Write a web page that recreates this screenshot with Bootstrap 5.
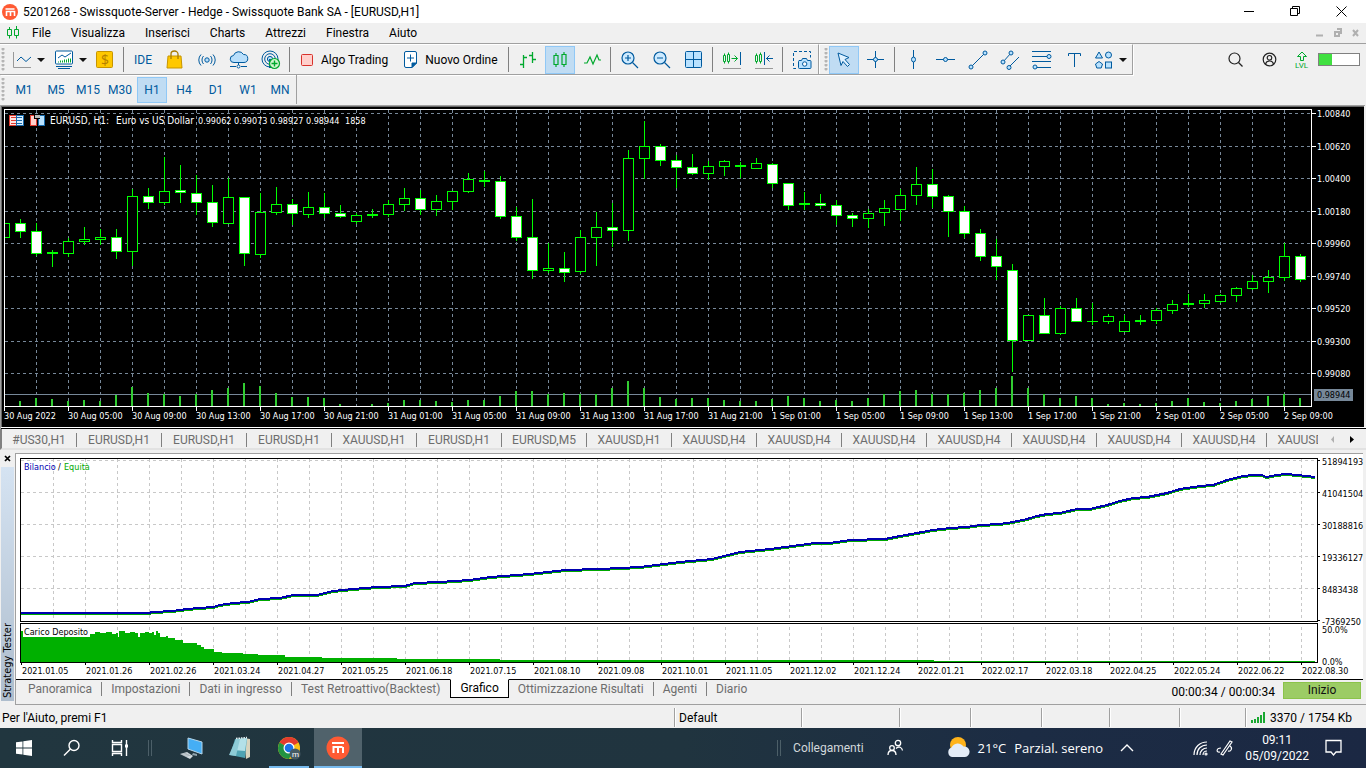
<!DOCTYPE html>
<html lang="it">
<head>
<meta charset="utf-8">
<meta name="viewport" content="width=device-width, initial-scale=1">
<title>5201268 - Swissquote-Server - Hedge - Swissquote Bank SA - [EURUSD,H1]</title>
<link href="https://cdn.jsdelivr.net/npm/bootstrap@5.3.0/dist/css/bootstrap.min.css" rel="stylesheet">
<style>
  body { font: 12px/16px Roboto, "Noto Sans", sans-serif; background: #f0f0f0; color: #000; overflow: hidden; }
  button { font: inherit; color: inherit; background: none; border: 0; padding: 0; white-space: nowrap; }
  svg { display: block; flex: none; }
  .titlebar { height: 23px; background: #fff; padding-right: 2px; }
  .winbtn { width: 46px; height: 23px; }
  .menubar { height: 20px; }
  .menubar .menu-item { padding: 0 10px; }
  .tools { height: 32px; border-top: 1px solid #a0a0a0; }
  .strip { height: 31px; border: 1px solid #a0a0a0; border-width: 0 1px 1px 0; border-top: 1px solid #fff; box-shadow: 1px 1px #fff; }
  .grip { width: 5px; margin: 3px 0; background: radial-gradient(circle at 3px 1px, #b4b4b4 1px, transparent 2px) 0 0/5px 4px; }
  .tool { width: 32px; height: 28px; display: flex; align-items: center; justify-content: center; }
  .tool.on, .frame.on { background: #c0dcf3; border: 1px solid #90c8f6; width: 30px; margin: 0 1px; }
  .tool-drop { width: 42px; height: 28px; display: flex; align-items: center; padding-left: 7px; gap: 5px; }
  .tool-text { height: 28px; display: flex; align-items: center; }
  .vline { width: 1px; height: 25px; background: #808080; margin: 0 3px 0 2px; }
  .caret { width: 0; height: 0; border: 4px solid transparent; border-top-color: #111; border-bottom: 0; }
  .frames { height: 30px; border-right: 1px solid #a0a0a0; margin-bottom: -1px; }
  .frames .grip { margin-right: 3px; }
  .frame { width: 32px; height: 26px; color: #005a9e; text-align: center; }
  .blue { color: #005a9e; }
  .account { padding-right: 6px; }
  .account .wide { width: 34px; }
  .meter { width: 42px; height: 13px; border: 1px solid #808080; background: #fff; }
  .meter div { width: 13px; height: 11px; background: #40e040; }
  .sheets { height: 21px; color: #6d6d6d; border-left: 2px solid #808080; border-bottom: 2px solid #e2e2e2; }
  .sheet-list { overflow: hidden; height: 21px; margin-right: 8px; }
  .sheet { width: 85px; flex: none; height: 14px; line-height: 14px; border-right: 1px solid #808080; text-align: center; }
  .sheet:first-child { width: 75px; }
  .side { width: 15px; }
  .side-label { width: 13px; margin-left: 1px; background: linear-gradient(#aebdcd, #d5e3f2); writing-mode: vertical-rl; transform: rotate(180deg); font: 11px/13px "DejaVu Sans Condensed", sans-serif; padding-top: 3px; text-align: left; }
  .tester-tabs { height: 25px; border-bottom: 1px solid #a0a0a0; border-left: 1px solid #a0a0a0; color: #6d6d6d; padding-left: 3px; }
  .tester-tab { padding: 0 9px; height: 14px; line-height: 14px; border-right: 1px solid #808080; margin-top: 2px; }
  .tester-tab.plain { border-right-color: transparent; }
  .tester-tab.active { height: 19px; line-height: 17px; margin-top: -1px; background: #fff; color: #000; border: 1px solid #000; border-top-color: #fff; padding: 0 9px; }
  .start { width: 78px; height: 17px; line-height: 15px; background: #9ccc65; border: 1px solid #8bc34a; margin: 2px 5px 0 8px; color: #111; }
  .status { height: 23px; padding: 1px 0 0 2px; }
  .cell { height: 19px; margin-top: 2px; border-left: 1px solid #a0a0a0; box-shadow: inset 1px 0 #fff; padding-left: 4px; flex: none; line-height: 20px; }
  .taskbar { height: 40px; background: linear-gradient(90deg, #21363f, #20343f 50%, #1c2c44 75%, #1b2843); color: #fff; }
  .task { width: 48px; height: 40px; display: flex; align-items: center; justify-content: center; }
  .task.running { width: 40px; box-shadow: inset 0 -2px #76b9ed; margin: 0 5px; }
  .task.current { background: #50626b; box-shadow: inset 0 -2px #76b9ed; }
  .bars { width: 4px; height: 16px; border: 1px solid #4c5f68; border-width: 0 1px; }
  .links { color: #d2d8db; }
  .weather { font: 13px/18px "Open Sans", sans-serif; margin-left: 26px; }
  .tray { margin-left: 42px; }
  .clock { margin: 0 16px 0 11px; }
  .chart-text, .tester-text { font: 9px "DejaVu Sans Condensed", sans-serif; fill: #fff; }
  .tester-text { fill: #000; }
  .chart-title { font: 10px "DejaVu Sans Condensed", sans-serif; fill: #fff; }
</style>
</head>
<body class="vh-100 d-flex flex-column">

<header class="titlebar d-flex align-items-center">
  <svg class="mx-1 ms-0" width="19" height="20" viewBox="0 0 19 20"><circle cx="10" cy="10" r="8" fill="#ff5a33"/><path d="M5.500 7h9M6.500 14v-4.500h8V14M10.500 9.500v4.500" fill="none" stroke="#fff" stroke-width="1.600"/></svg>
  <span>5201268 - Swissquote-Server - Hedge - Swissquote Bank SA - [EURUSD,H1]</span>
  <div class="ms-auto d-flex">
    <button class="winbtn" aria-label="Riduci"><svg class="mx-auto" width="11" height="11"><path d="M0 5.500h10" stroke="#000"/></svg></button>
    <button class="winbtn" aria-label="Ripristina"><svg class="mx-auto" width="11" height="11" fill="none" stroke="#000"><path d="M.5 2.500h7v7h-7zM2.500 2.500v-2h7v7h-2"/></svg></button>
    <button class="winbtn" aria-label="Chiudi"><svg class="mx-auto" width="11" height="11" stroke="#000"><path d="M.5.500l10 10M10.500.500l-10 10"/></svg></button>
  </div>
</header>

<nav class="menubar d-flex align-items-center">
  <svg class="ms-1 me-0" width="18" height="16" fill="none" stroke="#00a82d"><path d="M3.500 4.500h4v6h-4zM5.500 2v2.500M5.500 10.500v3M10.500 4.500h4v6h-4zM12.500 1v3.500M12.500 10.500v3"/></svg>
  <button class="menu-item">File</button><button class="menu-item">Visualizza</button><button class="menu-item">Inserisci</button><button class="menu-item">Charts</button><button class="menu-item">Attrezzi</button><button class="menu-item">Finestra</button><button class="menu-item">Aiuto</button>
  <svg class="ms-auto me-1" width="46" height="10" stroke="#b0b0b0" fill="none"><path d="M0 7.500h7" stroke-width="2"/><path d="M19 4h4v4h-4zM21 1h4v5" stroke-width="2"/><path d="M37 2l5 6M42 2l-5 6" stroke-width="2"/></svg>
</nav>

<div class="tools d-flex">
  <div class="strip d-flex align-items-center">
    <div class="grip align-self-stretch"></div>
    <button class="tool-drop" aria-label="Grafico"><svg width="20" height="20" fill="none"><path d="M1.500 2v15.500H19" stroke="#999"/><path d="M5 11l4-4 5 4.500L19 7" stroke="#005a9e"/></svg><i class="caret"></i></button>
    <button class="tool-drop" aria-label="Indicatori"><svg width="20" height="20" fill="none"><rect x="1.500" y="1" width="17" height="13" rx="1" fill="#fff" stroke="#005a9e"/><path d="M4 8l4-3 3 2 6-4" stroke="#005a9e"/><path d="M4.500 12.500v-1M6.500 12.500v-2M8.500 12.500v-2M10.500 12.500v-3M12.500 12.500v-3M14.500 12.500v-4M16.500 12.500v-4" stroke="#00a82d"/><path d="M2 16.500h16M4 18.500h12" stroke="#005a9e"/></svg><i class="caret"></i></button>
    <button class="tool" aria-label="Simboli"><svg width="18" height="18"><rect x=".5" y=".5" width="16" height="16" rx="1" fill="#ffc800" stroke="#c79500"/><text x="5" y="14" font-size="14" font-family="Open Sans" fill="#b57f00">$</text></svg></button>
    <div class="vline"></div>
    <button class="tool blue">IDE</button>
    <button class="tool" aria-label="Market"><svg width="18" height="20"><path d="M2 6h13l1 12H1z" fill="#ffc800" stroke="#c79500"/><path d="M5 9V4a3.500 3 0 017 0v5" fill="none" stroke="#a87a00" stroke-width="1.300"/></svg></button>
    <button class="tool" aria-label="Segnali"><svg width="20" height="14" fill="none" stroke="#005a9e"><circle cx="10" cy="7" r="2.200" fill="#b9dffb"/><path d="M6.500 3a6 6 0 000 8M13.500 3a6 6 0 010 8M4 1.500a8 8 0 000 11M16 1.500a8 8 0 010 11"/></svg></button>
    <button class="tool" aria-label="Cloud"><svg width="20" height="18" fill="none" stroke="#005a9e"><path d="M5 11.500a3.500 3.500 0 01-.5-7 5.500 5.500 0 0110-1 4 4 0 01.5 8z" fill="#b9dffb"/><path d="M9.500 12v2M1 15.500h6M12 15.500h6"/><circle cx="9.500" cy="15.500" r="1.500" fill="#fff"/></svg></button>
    <button class="tool" aria-label="VPS"><svg width="20" height="20" fill="none" stroke="#005a9e"><circle cx="9" cy="9" r="8"/><circle cx="9" cy="9" r="5.300"/><circle cx="9" cy="9" r="2.600" fill="#b9dffb"/><path d="M9 9v9" stroke-width="2"/><circle cx="13.500" cy="13.500" r="5" fill="#d3f5d0" stroke="#00a82d" stroke-width="1.200"/><path d="M13.500 10.500v6M10.500 13.500h6" stroke="#00a82d" stroke-width="1.400"/></svg></button>
    <div class="vline"></div>
    <button class="tool-text px-2 gap-2"><svg width="12" height="12"><rect x=".5" y=".5" width="11" height="11" rx="1" fill="#ffd0cc" stroke="#d8322c"/></svg>Algo Trading</button>
    <button class="tool-text ps-2 pe-2 gap-2"><svg width="13" height="18" fill="none" stroke="#005a9e"><path d="M2 .5h9a1.500 1.500 0 011.500 1.500v10L8 16.500H2A1.500 1.500 0 01.5 15V2A1.500 1.500 0 012 .5z" fill="#fff"/><path d="M8 16.500v-4.500h4.500z" fill="#005a9e"/><path d="M6.500 3.500v7M3 7h7"/></svg>Nuovo Ordine</button>
    <div class="vline"></div>
    <button class="tool" aria-label="Barre"><svg width="18" height="20" fill="none" stroke="#00a82d" stroke-width="1.300"><path d="M1 14.500h3M4.500 5v13M5 7.500h3M10 5.500h3.500M13.500 2v11M13.500 9.500H17"/></svg></button>
    <button class="tool on" aria-label="Candele"><svg width="16" height="20" fill="none" stroke="#00a82d" stroke-width="1.200"><path d="M2 5.500h4v9H2zM4 3v2.500M4 14.500V17M10 4.500h4v10h-4zM12 2v2.500M12 14.500V17"/></svg></button>
    <button class="tool" aria-label="Linea"><svg width="18" height="14" fill="none" stroke="#00a82d" stroke-width="1.200"><path d="M1 10l3 0 3-6 3 7 4-9 2 5h2"/></svg></button>
    <div class="vline"></div>
    <button class="tool" aria-label="Ingrandisci"><svg width="18" height="18" fill="none" stroke="#005a9e" stroke-width="1.200"><circle cx="7" cy="7" r="6" fill="#cdeaff"/><path d="M11.500 11.500l5.500 5.500M4 7h6M7 4v6"/></svg></button>
    <button class="tool" aria-label="Riduci zoom"><svg width="18" height="18" fill="none" stroke="#005a9e" stroke-width="1.200"><circle cx="7" cy="7" r="6" fill="#cdeaff"/><path d="M11.500 11.500l5.500 5.500M4 7h6"/></svg></button>
    <button class="tool" aria-label="Affianca"><svg width="18" height="18" fill="#b9e2ff" stroke="#005a9e"><rect x=".5" y=".5" width="16" height="16" rx="1"/><path d="M8.500.500v16M.5 8.500h16"/></svg></button>
    <div class="vline"></div>
    <button class="tool" aria-label="Scorrimento"><svg width="20" height="20" fill="none" stroke="#00a82d"><path d="M1.500 5.500h2v6h-2zM2.500 3.500v2M2.500 11.500v2M5.500 4.500h2v7h-2zM6.500 2.500v2M6.500 11.500v2M9.500 8.500h6M12.500 5.500l3 3-3 3"/><path d="M18.500 2v13" stroke="#005a9e"/><path d="M1 18.500h18" stroke="#999"/></svg></button>
    <button class="tool" aria-label="Spostamento"><svg width="20" height="20" fill="none" stroke="#00a82d"><path d="M1.500 5.500h2v6h-2zM2.500 3.500v2M2.500 11.500v2M5.500 4.500h2v7h-2zM6.500 2.500v2M6.500 11.500v2"/><path d="M10.500 2v13M12 8.500h7M15.500 5.500l-3 3 3 3" stroke="#005a9e"/><path d="M1 18.500h18" stroke="#999"/></svg></button>
    <div class="vline"></div>
    <button class="tool" aria-label="Schermata"><svg width="20" height="20" fill="none" stroke="#005a9e"><path d="M4 18.500H1.500v-17h17v6" stroke-dasharray="3 2"/><path d="M7 10.500h2.500l1-2h4l1 2H18a1 1 0 011 1v6a1 1 0 01-1 1H7.500a1 1 0 01-1-1v-6z" fill="#b9e2ff"/><circle cx="12.700" cy="14" r="2.200" fill="#fff"/></svg></button>
  </div>
  <div class="strip d-flex align-items-center ps-1">
    <div class="grip align-self-stretch"></div>
    <button class="tool on" aria-label="Cursore"><svg width="16" height="18" fill="#dff1ff" stroke="#005a9e"><path d="M2 2l11 4.500-4 2 4.500 5-2 2-4.500-5-2 4z"/></svg></button>
    <button class="tool" aria-label="Mirino"><svg width="18" height="18" fill="none" stroke="#005a9e"><path d="M0 8.500h17M8.500 0v17"/><circle cx="8.500" cy="8.500" r="2" fill="#b9e2ff"/></svg></button>
    <div class="vline"></div>
    <button class="tool" aria-label="Linea verticale"><svg width="18" height="20" fill="#b9e2ff" stroke="#005a9e"><path d="M8.500 0v19"/><ellipse cx="8.500" cy="9.500" rx="2" ry="2.500"/></svg></button>
    <button class="tool" aria-label="Linea orizzontale"><svg width="20" height="18" fill="#b9e2ff" stroke="#005a9e"><path d="M0 8.500h19"/><circle cx="9.500" cy="8.500" r="2"/></svg></button>
    <button class="tool" aria-label="Trendline"><svg width="20" height="20" fill="#b9e2ff" stroke="#005a9e"><path d="M3 17L17 3"/><circle cx="3" cy="17" r="2"/><circle cx="17" cy="3" r="2"/></svg></button>
    <button class="tool" aria-label="Canale"><svg width="20" height="20" fill="#b9e2ff" stroke="#005a9e"><path d="M3 12l8-9M9 17L19 7"/><circle cx="3" cy="12" r="2"/><circle cx="11" cy="3" r="2"/><circle cx="9" cy="17.500" r="2"/></svg></button>
    <button class="tool" aria-label="Fibonacci"><svg width="20" height="20" fill="#b9e2ff" stroke="#005a9e"><path d="M0 1.500h19M0 6.500h15M0 11.500h19M4 17.500h15"/><circle cx="17" cy="6.500" r="2"/><circle cx="3" cy="17" r="2"/></svg></button>
    <button class="tool" aria-label="Testo"><svg width="16" height="16" fill="none" stroke="#005a9e"><path d="M2.500 4V1.500h12V4M8.500 1.500V15"/></svg></button>
    <button class="tool-drop ps-1" aria-label="Oggetti"><svg width="20" height="20" fill="#b9e2ff" stroke="#005a9e"><path d="M5 2l3.500 6h-7z"/><circle cx="14.500" cy="5" r="3"/><path d="M5 11.500l3.500 2.500-1.300 4H2.800L1.500 14z"/><rect x="11.500" y="12" width="6" height="6"/></svg><i class="caret"></i></button>
  </div>
  <div class="account ms-auto d-flex align-items-center">
    <button class="tool wide" aria-label="Cerca"><svg width="15" height="15" fill="none" stroke="#222" stroke-width="1.200"><circle cx="6.500" cy="6.500" r="5.500"/><path d="M10.500 10.500l4 4"/></svg></button>
    <button class="tool wide" aria-label="Account"><svg width="15" height="15" fill="none" stroke="#222" stroke-width="1.200"><circle cx="7.500" cy="7.500" r="6.300"/><circle cx="7.500" cy="5.800" r="2.300"/><path d="M3.500 12c1-4 7-4 8 0"/></svg></button>
    <button class="tool" aria-label="Livello"><svg width="16" height="20" fill="none" stroke="#00a82d"><path d="M6.500 10.500v-4h-3l4.500-4.500 4.500 4.500h-3v4z"/><text x="1" y="18" font-size="8" font-family="Roboto" fill="#00a82d" stroke="none">LVL</text></svg></button>
    <div class="meter"><div></div></div>
  </div>
</div>

<div class="d-flex">
  <div class="frames d-flex align-items-center">
    <div class="grip align-self-stretch"></div>
    <button class="frame">M1</button><button class="frame">M5</button><button class="frame">M15</button><button class="frame">M30</button><button class="frame on">H1</button><button class="frame">H4</button><button class="frame">D1</button><button class="frame">W1</button><button class="frame">MN</button>
  </div>
</div>

<svg id="priceChart" class="w-100" height="325" shape-rendering="crispEdges"></svg>

<div class="sheets d-flex">
  <div class="sheet-list d-flex flex-grow-1 align-items-center" id="sheetList"></div>
  <svg class="me-2" width="32" height="19"><path d="M8 7v7L5 10.500z" fill="#b0b0b0"/><path d="M24 7v7l4-3.500z" fill="#000"/></svg>
</div>

<div class="d-flex flex-grow-1">
  <div class="side d-flex flex-column">
    <button class="mx-auto" aria-label="Chiudi pannello"><svg width="7" height="17"><path d="M1 6l5 5M6 6l-5 5" stroke="#000" stroke-width="1.700"/></svg></button>
    <div class="side-label flex-grow-1 mb-1">Strategy Tester</div>
  </div>
  <main class="flex-grow-1 d-flex flex-column">
    <svg id="testerChart" class="w-100" height="230" shape-rendering="crispEdges"></svg>
    <div class="tester-tabs d-flex align-items-start">
      <button class="tester-tab">Panoramica</button><button class="tester-tab">Impostazioni</button><button class="tester-tab">Dati in ingresso</button><button class="tester-tab plain">Test Retroattivo(Backtest)</button><button class="tester-tab active">Grafico</button><button class="tester-tab">Ottimizzazione Risultati</button><button class="tester-tab">Agenti</button><button class="tester-tab plain">Diario</button>
      <span class="ms-auto text-black pt-1">00:00:34 / 00:00:34</span>
      <button class="start">Inizio</button>
    </div>
  </main>
</div>

<footer class="status d-flex">
  <div class="flex-grow-1 pt-1">Per l'Aiuto, premi F1</div>
  <div class="cell" style="width:127px">Default</div>
  <div class="cell" style="width:98px"></div><div class="cell" style="width:71px"></div><div class="cell" style="width:71px"></div><div class="cell" style="width:68px"></div><div class="cell" style="width:70px"></div><div class="cell" style="width:66px"></div>
  <div class="cell d-flex gap-1 align-items-center" style="width:121px"><svg width="16" height="13" stroke="#1aa832" stroke-width="2"><path d="M2 12V9M5 12V8M8 12V6M11 12V4M14 12V1"/></svg>3370 / 1754 Kb</div>
</footer>

<div class="taskbar d-flex align-items-center">
  <button class="task" aria-label="Start"><svg width="16" height="16" fill="#fff"><path d="M0 2.300L6.500 1.400v6.100H0zM7.300 1.300L16 0v7.500H7.300zM0 8.400h6.500v6.200L0 13.700zM7.300 8.400H16V16l-8.700-1.200z"/></svg></button>
  <button class="task" aria-label="Cerca"><svg width="18" height="18" fill="none" stroke="#fff" stroke-width="1.400"><circle cx="11" cy="6.500" r="5"/><path d="M7.500 10L1 16.500"/></svg></button>
  <button class="task" aria-label="Visualizzazione attività"><svg width="18" height="16" fill="none" stroke="#fff" stroke-width="1.400"><path d="M1.500 4.500h9v7h-9zM1.500 0v2.500h9V0M1.500 16v-2.500h9V16M15.500 0v16"/><path d="M14 6h3" stroke-width="3"/></svg></button>
  <div class="bars ms-1"></div>
  <button class="task ms-3" aria-label="Computer"><svg width="24" height="24"><path d="M8 2l14 4v12L8 13z" fill="#45aef5" stroke="#b5d6ea"/><path d="M13 17l4 1v2l-5-1z" fill="#8fa2ac"/><path d="M0 18l7-2 6 4-3 3z" fill="#d3dbe0"/><path d="M1 18.500l6-1.500M3 19.500l6-1.500M5 20.500l6-1.500" stroke="#8b979e" stroke-width=".6"/></svg></button>
  <button class="task" aria-label="Blocco note"><svg width="24" height="24"><path d="M16 2l6 1v18l-4 2z" fill="#d8d3bd"/><path d="M7 3l12-1-2 20-15-3z" fill="#4fa3b3"/><path d="M8 3l11-1-2 13-12-1z" fill="#b3e0e8"/><path d="M8 3l4 0-4 17-7-1z" fill="#8ecbd6"/><path d="M8 2.500l11-1" stroke="#e9f3f5" stroke-width="1.500" stroke-dasharray="1.500 1"/></svg></button>
  <button class="task running" aria-label="Chrome"><svg width="24" height="24"><circle cx="12" cy="12" r="11" fill="#fbc116"/><path d="M12 12L2.500 6.500a11 11 0 0119 0z" fill="#e33b2e"/><path d="M12 12L2.500 6.500A11 11 0 0012 23l4-8z" fill="#229342"/><circle cx="12" cy="12" r="5.500" fill="#fff"/><circle cx="12" cy="12" r="4.300" fill="#1a73e8"/><circle cx="18" cy="18" r="5.500" fill="#455a64"/><text x="15" y="21" font-size="8" font-family="Roboto" fill="#fff">m</text></svg></button>
  <button class="task current" aria-label="MetaTrader"><svg width="24" height="24"><circle cx="12" cy="12" r="11.500" fill="#ff5a33"/><path d="M6 7h12M7.500 17v-6h9M12 11v6M17 11v6" fill="none" stroke="#fff" stroke-width="2"/></svg></button>
  <div class="ms-auto bars"></div>
  <span class="links ms-2 ps-1">Collegamenti</span>
  <button class="task ms-2" aria-label="Persone"><svg width="18" height="18" fill="none" stroke="#fff" stroke-width="1.300"><circle cx="11" cy="4" r="2.700"/><circle cx="5" cy="9" r="2.300"/><path d="M1 16c0-6 8-6 8 0M9 9.500c3-3 6-1 6.500 2"/></svg></button>
  <button class="weather d-flex align-items-center gap-2"><svg width="24" height="24"><circle cx="12" cy="9" r="8" fill="#ffb31a"/><path d="M6 21a5 5 0 01-.5-9.500 7 7 0 0112-1A5.200 5.200 0 0119 21z" fill="#e4ecf7"/></svg><span>21°C</span><span>Parzial. sereno</span></button>
  <button class="task" aria-label="Icone nascoste"><svg width="14" height="8" fill="none" stroke="#fff" stroke-width="1.400"><path d="M1 7l6-6 6 6"/></svg></button>
  <button class="tray" aria-label="Rete"><svg width="15" height="16" fill="none" stroke="#fff" stroke-width="1.200"><path d="M1 15C1 7 7 2 14 2M4 15c0-6 4-10 10-10M7 15c0-4 3-7 7-7M10 15c0-2 1.500-4 4-4"/><circle cx="13" cy="14" r="1"/></svg></button>
  <button class="ms-2" aria-label="Penna"><svg width="18" height="18" fill="none" stroke="#fff" stroke-width="1.200"><path d="M5 15L14 2l2 1-9 13zM5 9c-5 0-5 5-1 4M12 12c3 1 5-3 2-5"/></svg></button>
  <div class="clock text-center">09:11<br>05/09/2022</div>
  <button class="me-4" aria-label="Notifiche"><svg width="17" height="18" fill="none" stroke="#fff" stroke-width="1.300"><path d="M1 1.500h15v11.500h-5l-2.500 3-2.500-3H1z"/></svg></button>
</div>

<script src="https://cdn.jsdelivr.net/npm/bootstrap@5.3.0/dist/js/bootstrap.bundle.min.js"></script>
<script>
const NS = 'http://www.w3.org/2000/svg';
function add(parent, tag, attrs, text) {
  const el = document.createElementNS(NS, tag);
  for (const k in attrs) el.setAttribute(k, attrs[k]);
  if (text !== undefined) el.textContent = text;
  parent.appendChild(el);
  return el;
}
const rect = (p, x, y, w, h, fill) => add(p, 'rect', {x, y, width: w, height: h, fill});

// one candle per hour: body top, body bottom, high, low, filled
const candles = [[119,134,119,134,0],[119,128,115,134,1],[127,150,119,152,1],[148,150,146,163,0],[137,150,134,153,0],[135,138,123,141,0],[133,136,125,141,0],[133,148,125,155,1],[92,148,85,162,0],[92,99,84,105,1],[87,99,53,101,0],[86,89,61,99,1],[89,99,71,111,1],[98,119,81,123,1],[93,120,74,120,0],[93,150,93,162,1],[108,151,89,154,0],[100,109,83,111,0],[100,110,95,121,1],[103,111,88,114,0],[103,110,89,114,1],[109,113,101,114,1],[111,118,109,120,0],[110,112,105,114,0],[100,111,96,113,0],[94,101,84,107,0],[94,106,86,111,1],[97,106,91,112,0],[87,98,87,106,0],[75,88,69,89,0],[76,78,67,83,0],[77,113,72,115,1],[112,134,103,137,1],[133,167,95,175,1],[164,167,139,169,0],[164,169,148,178,1],[133,168,126,170,0],[123,134,108,162,0],[123,127,99,143,1],[54,127,46,137,0],[42,55,17,75,0],[42,57,40,62,1],[56,64,51,84,1],[63,70,50,71,1],[62,70,57,76,0],[57,63,56,72,0],[61,63,58,74,0],[59,65,54,65,0],[60,80,59,84,1],[79,102,79,106,1],[99,101,88,106,0],[99,102,90,105,1],[101,112,96,121,1],[111,115,109,123,1],[109,115,105,124,0],[104,109,96,122,0],[91,106,85,117,0],[80,92,63,101,0],[80,93,65,104,1],[92,108,91,133,1],[107,130,102,134,1],[129,153,125,157,1],[152,163,135,176,1],[166,237,160,268,1],[211,237,211,237,0],[211,230,194,230,1],[204,230,202,231,0],[204,218,194,218,1],[217,218,199,221,0],[212,218,210,220,0],[217,228,211,228,0],[216,218,211,221,0],[206,217,204,220,0],[200,207,196,210,0],[199,201,190,203,0],[196,200,190,204,0],[191,198,190,199,0],[184,192,183,198,0],[177,185,171,186,0],[173,178,166,189,0],[152,174,139,177,0],[152,176,150,178,1]];
const volumes = [0,5,8,7,5,6,5,11,19,13,12,10,12,16,18,23,20,13,9,9,8,2,0,2,3,6,6,5,4,6,6,10,15,15,12,13,12,12,18,25,18,9,7,8,8,6,5,5,7,10,8,5,6,5,8,12,15,16,12,12,13,16,18,30,18,12,8,10,8,2,3,2,3,5,8,4,3,5,7,10,12,8];
const prices = ['1.00840','1.00620','1.00400','1.00180','0.99960','0.99740','0.99520','0.99300','0.99080'];
const priceRows = [9,42,74,107,139,172,204,237,269];
const times = ['30 Aug 2022','30 Aug 05:00','30 Aug 09:00','30 Aug 13:00','30 Aug 17:00','30 Aug 21:00','31 Aug 01:00','31 Aug 05:00','31 Aug 09:00','31 Aug 13:00','31 Aug 17:00','31 Aug 21:00','1 Sep 01:00','1 Sep 05:00','1 Sep 09:00','1 Sep 13:00','1 Sep 17:00','1 Sep 21:00','2 Sep 01:00','2 Sep 05:00','2 Sep 09:00'];

function drawPrice() {
  const s = document.getElementById('priceChart');
  s.replaceChildren();
  const W = s.clientWidth, R = W - 55;
  rect(s, 0, 0, W, 325, '#f0f0f0');
  rect(s, 0, 1, W - 1, 1, '#a0a0a0');
  rect(s, 0, 1, 1, 324, '#a0a0a0');
  rect(s, 1, 2, W - 3, 323, '#696969');
  rect(s, 2, 3, W - 4, 320, '#000');
  rect(s, 1, 323, W, 1, '#fff');
  rect(s, 1, 324, W, 1, '#000');
  const grid = add(s, 'g', {stroke: '#778899', 'stroke-dasharray': '3 3'});
  for (let x = 36.5; x < R; x += 32) add(grid, 'path', {d: `M${x} 6V302`});
  for (const y of priceRows) add(grid, 'path', {d: `M5 ${y + .5}H${R}`});
  rect(s, 5, 290, R - 5, 1, '#778899');
  volumes.forEach((v, i) => rect(s, 3 + 16 * i, 302 - v, 2, v, '#32cd32'));
  candles.forEach(([t, b, h, l, full], i) => {
    const x = 4 + 16 * i, left = Math.max(5, x - 5), right = x + 6;
    if (i) rect(s, x, h, 1, l - h, '#0f0');
    rect(s, left, t, right - left, b - t, '#0f0');
    if (b - t > 2) rect(s, left + (i ? 1 : 0), t + 1, right - left - (i ? 2 : 1), b - t - 2, full ? '#fff' : '#000');
  });
  rect(s, 4, 5, R - 3, 1, '#fff');
  rect(s, 4, 5, 1, 302, '#fff');
  rect(s, R, 5, 1, 298, '#fff');
  rect(s, 4, 302, R - 3, 1, '#fff');
  prices.forEach((p, i) => {
    rect(s, R + 1, priceRows[i], 4, 1, '#fff');
    add(s, 'text', {class: 'chart-text', x: R + 6, y: priceRows[i] + 4}, p);
  });
  rect(s, R + 3, 285, 39, 12, '#778899');
  add(s, 'text', {class: 'chart-text', x: R + 6, y: 294, style: 'fill:#000'}, '0.98944');
  times.forEach((t, i) => {
    rect(s, 4 + 64 * i, 303, 1, 4, '#fff');
    add(s, 'text', {class: 'chart-text', x: 4 + 64 * i, y: 315}, t);
  });
  rect(s, 9, 11, 8, 11, '#e03c31'); rect(s, 16, 11, 8, 11, '#1769aa');
  rect(s, 10, 12, 6, 9, '#ffe3e0'); rect(s, 17, 12, 6, 9, '#d9efff');
  for (const y of [13, 16, 19]) { rect(s, 11, y, 5, 1, '#e03c31'); rect(s, 17, y, 5, 1, '#1769aa'); }
  rect(s, 30, 11, 7, 11, '#e03c31'); rect(s, 31, 12, 5, 9, '#ffd0cc');
  rect(s, 38, 11, 7, 11, '#1769aa'); rect(s, 39, 12, 5, 9, '#b9e2ff');
  rect(s, 34, 11, 6, 4, '#000'); rect(s, 35, 11, 5, 3, '#bbb');
  for (const [x, t] of [[50, 'EURUSD, H1:'], [116, 'Euro vs US Dollar']])
    add(s, 'text', {class: 'chart-title', x, y: 20}, t);
  for (const [x, t] of [[198, '0.99062'], [234, '0.99073'], [270, '0.98927'], [306, '0.98944'], [345, '1858']])
    add(s, 'text', {class: 'chart-text', x, y: 20}, t);
}

const balance = [[21,163],[148,163],[153,162],[173,161],[187,159],[200,158],[213,157],[220,155],[233,153],[248,152],[260,149],[280,148],[293,145],[317,145],[333,141],[353,139],[377,137],[405,136],[415,133],[440,132],[470,130],[490,127],[530,124],[565,120],[600,119],[640,117],[680,112],[712,109],[740,102],[770,99],[800,95],[815,93],[830,93],[850,90],[885,89],[900,86],[917,83],[933,80],[950,78],[967,77],[980,75],[1000,74],[1013,72],[1027,69],[1037,66],[1047,64],[1060,63],[1077,59],[1090,59],[1107,55],[1120,51],[1133,48],[1147,47],[1167,43],[1180,39],[1200,36],[1213,35],[1227,30],[1243,26],[1253,25],[1262,25],[1266,27],[1277,25],[1286,24],[1297,25],[1315,27]];
const load = [[21,181],[23,187],[90,184],[95,182],[100,183],[106,182],[112,184],[116,183],[118,187],[119,181],[125,183],[130,182],[135,183],[138,187],[140,183],[145,182],[149,183],[152,182],[154,185],[156,181],[158,183],[160,187],[166,186],[168,188],[175,190],[183,193],[197,195],[201,197],[204,199],[214,202],[222,203],[243,204],[258,205],[285,207],[322,208],[397,209],[500,210],[934,211],[1315,211]];
const dates = ['2021.01.05','2021.01.26','2021.02.26','2021.03.24','2021.04.27','2021.05.25','2021.06.18','2021.07.15','2021.08.10','2021.09.08','2021.10.01','2021.11.05','2021.12.02','2021.12.24','2022.01.21','2022.02.17','2022.03.18','2022.04.25','2022.05.24','2022.06.22','2022.08.30'];

function drawTester() {
  const svg = document.getElementById('testerChart');
  svg.replaceChildren();
  const W = svg.clientWidth + 15, R = W - 49;
  const s = add(svg, 'g', {transform: 'translate(-15 0)'});
  rect(s, 15, 3, W - 18, 227, '#a0a0a0');
  rect(s, 16, 4, W - 19, 226, '#fff');
  const grid = add(s, 'g', {stroke: '#c8c8c8', 'stroke-dasharray': '3 3'});
  for (let x = 53.5; x < R; x += 32) add(grid, 'path', {d: `M${x} 9V212`});
  for (const y of [10, 42, 74, 106, 138]) add(grid, 'path', {d: `M21 ${y + .5}H${R}`});
  rect(s, 21, 172, R - 20, 1, '#fff');
  let d = 'M21 212V181';
  for (const [x, y] of load) d += `H${x}V${y}`;
  add(s, 'path', {d: d + 'V212z', fill: '#00b000'});
  for (const [dy, c] of [[1, '#00a800'], [0, '#0000b0']]) {
    const p = 'M' + balance.map(([x, y]) => `${x} ${y + dy}`).join('L');
    add(s, 'path', {d: p, fill: 'none', stroke: c, 'stroke-width': 2});
  }
  const box = {fill: 'none', stroke: '#000'};
  add(s, 'rect', {x: 20.5, y: 8.5, width: R - 20, height: 163, ...box});
  add(s, 'rect', {x: 20.5, y: 173.5, width: R - 20, height: 39, ...box});
  ['51894193','41041504','30188816','19336127','8483438','-7369250'].forEach((t, i) => {
    rect(s, R + 1, 10 + 32 * i, 2, 1, '#000');
    add(s, 'text', {class: 'tester-text', x: R + 5, y: 15 + 32 * i}, t);
  });
  rect(s, R + 4, 175, 40, 9, '#fff');
  add(s, 'text', {class: 'tester-text', x: R + 5, y: 183}, '50.0%');
  dates.forEach((t, i) => {
    rect(s, 21 + 64 * i, 213, 1, 2, '#000');
    add(s, 'text', {class: 'tester-text', x: 22 + 64 * i, y: 224}, t);
  });
  rect(s, R + 5, 208, 22, 8, '#fff');
  add(s, 'text', {class: 'tester-text', x: R + 5, y: 215}, '0.0%');
  add(s, 'text', {class: 'tester-text', x: 24, y: 20, style: 'fill:#0000b0'}, 'Bilancio');
  add(s, 'text', {class: 'tester-text', x: 58, y: 20}, '/');
  add(s, 'text', {class: 'tester-text', x: 64, y: 20, style: 'fill:#00a800'}, 'Equità');
  rect(s, 24, 176, 66, 11, '#fff');
  add(s, 'text', {class: 'tester-text', x: 24, y: 185}, 'Carico Deposito');
  rect(s, 16, 229, W - 19, 1, '#000');
}

document.getElementById('sheetList').innerHTML =
  ['#US30,H1','EURUSD,H1','EURUSD,H1','EURUSD,H1','XAUUSD,H1','EURUSD,H1','EURUSD,M5','XAUUSD,H1','XAUUSD,H4','XAUUSD,H4','XAUUSD,H4','XAUUSD,H4','XAUUSD,H4','XAUUSD,H4','XAUUSD,H4','XAUUSD,H4']
  .map(t => `<button class="sheet">${t}</button>`).join('');

function draw() { drawPrice(); drawTester(); }
draw();
addEventListener('resize', draw);
</script>
</body>
</html>
